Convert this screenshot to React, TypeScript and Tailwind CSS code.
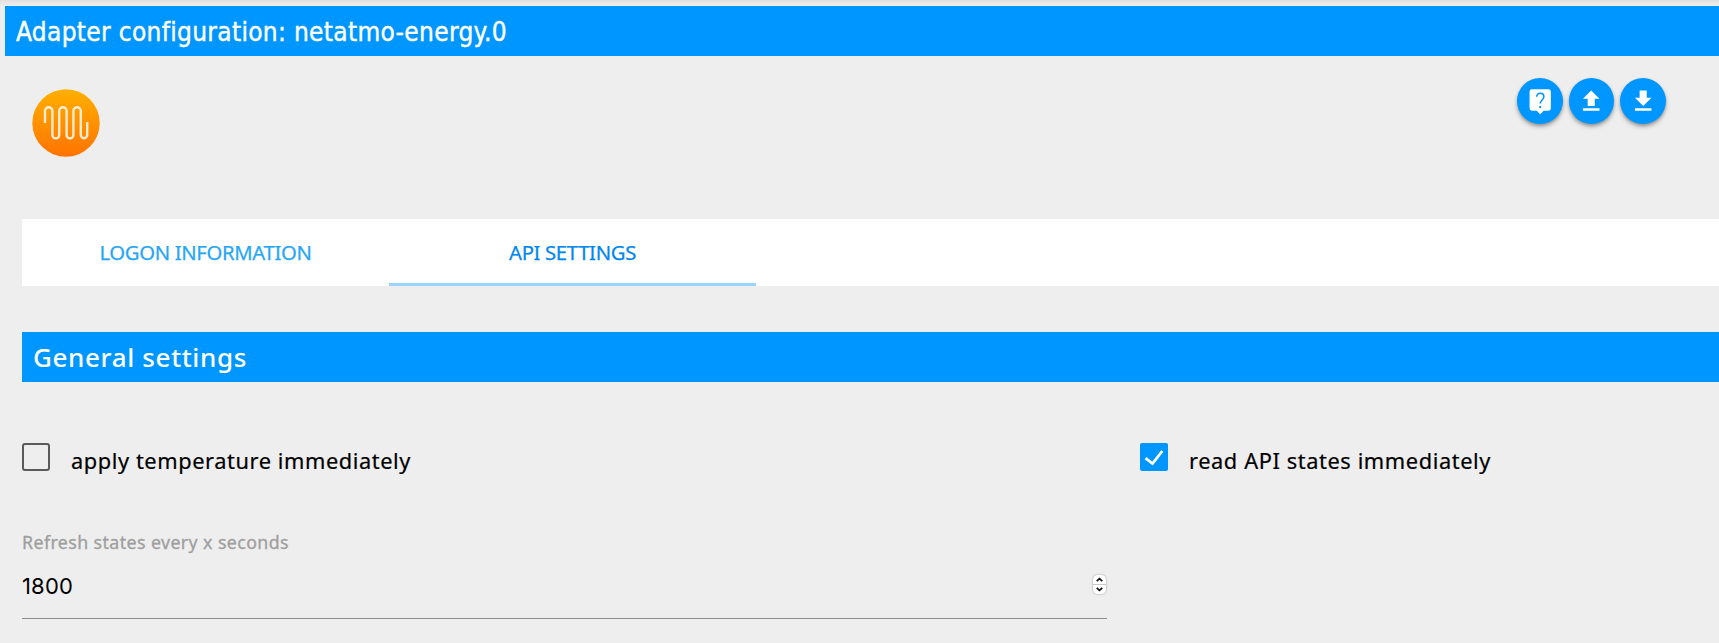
import React from "react";

function LogoIcon() {
  return (
    <svg className="block h-[68px] w-[68px]" viewBox="0 0 68 68" fill="none">
      <defs>
        <linearGradient id="flame" x1="0" y1="0" x2="0" y2="1">
          <stop offset="0" stopColor="#ffb000" />
          <stop offset="1" stopColor="#ff7300" />
        </linearGradient>
      </defs>
      <circle cx="34" cy="34" r="33.7" fill="url(#flame)" />
      <path
        d="M13 34V22a3.7 3.7 0 0 1 7.4 0v24a3.4 3.4 0 0 0 6.8 0V22a3.7 3.7 0 0 1 7.4 0v24a3.4 3.4 0 0 0 6.8 0V22a3.7 3.7 0 0 1 7.4 0v24a3.2 3.2 0 0 0 6.4 0V33"
        stroke="#ffecd0"
        strokeWidth="2.4"
      />
    </svg>
  );
}

function RoundButton({ children }: { children: React.ReactNode }) {
  return (
    <button className="flex h-[45.5px] w-[45.5px] items-center justify-center rounded-full bg-[#0096ff] shadow-[0_2px_3px_rgba(0,0,0,0.22),0_3px_5px_rgba(0,0,0,0.2)]">
      <svg className="block h-[28.4px] w-[28.4px]" viewBox="0 0 24 24" fill="white">
        {children}
      </svg>
    </button>
  );
}

function Fit({ width, size, children }: { width: number; size: number; children: string }) {
  const ref = React.useRef<HTMLSpanElement>(null);
  const [spacing, setSpacing] = React.useState(0);
  React.useLayoutEffect(() => {
    const el = ref.current;
    if (el) setSpacing((width - el.getBoundingClientRect().width) / children.length);
  }, [width, children]);
  return (
    <span ref={ref} className="inline-block whitespace-pre" style={{ letterSpacing: spacing, fontSize: size }}>
      {children}
    </span>
  );
}

export default function App() {
  return (
    <div className="h-[643px] w-full overflow-hidden bg-[#eeeeee] font-['Noto_Sans',sans-serif] text-black">
      <div className="h-[5px] bg-linear-to-b from-[#e0e0e0] to-[#ececec]" />
      <header className="mt-px ml-[5px] flex h-[50px] items-center bg-[#0096ff] pt-[3px] pl-[11px] font-['DejaVu_Sans_Condensed','DejaVu_Sans',sans-serif] font-stretch-condensed text-white [-webkit-text-stroke:0.4px_white]">
        <Fit width={491} size={26}>Adapter configuration: netatmo-energy.0</Fit>
      </header>

      <div className="flex h-[163px] items-start justify-between pr-[53.5px] pl-[32.4px]">
        <div className="pt-[33.4px]">
          <LogoIcon />
        </div>
        <div className="flex gap-[6px] pt-[22.4px]">
          <RoundButton>
            <path d="M19 2H5a2 2 0 0 0-2 2v14a2 2 0 0 0 2 2h4l3 3 3-3h4a2 2 0 0 0 2-2V4a2 2 0 0 0-2-2z" />
            <path d="M9 8.3c0-1.9 1.2-3 3-3s3.1 1.2 3.1 2.9c0 2.6-3 2.9-3 5.8" fill="none" stroke="#0096ff" strokeWidth="1.3" />
            <path d="M11.2 16h1.6v1.8h-1.6z" fill="#0096ff" />
          </RoundButton>
          <RoundButton>
            <path d="M9 16h6v-6h4l-7-7-7 7h4zm-4 2h14v2H5z" />
          </RoundButton>
          <RoundButton>
            <path d="M19 9h-4V3H9v6H5l7 7 7-7zM5 18v2h14v-2H5z" />
          </RoundButton>
        </div>
      </div>

      <nav className="ml-[22px] flex h-[67px] bg-white [-webkit-text-stroke:0.25px_currentColor]">
        <button className="flex w-[367px] items-center justify-center text-[#26a6f5]">
          <Fit width={212} size={20.3}>LOGON INFORMATION</Fit>
        </button>
        <button className="flex w-[367px] items-center justify-center border-b-[3px] border-[#99d5ff] pt-[3px] text-[#0087f0]">
          <Fit width={127} size={20.3}>API SETTINGS</Fit>
        </button>
      </nav>

      <h2 className="mt-[45.5px] ml-[22px] flex h-[50.5px] items-center bg-[#0096ff] pt-[2px] pl-[11px] font-medium text-white">
        <Fit width={214} size={26}>General settings</Fit>
      </h2>

      <div className="mt-[61px] ml-[22px] flex h-[28px] [-webkit-text-stroke:0.2px_currentColor]">
        <label className="flex w-[1118px] items-center">
          <span className="h-[28px] w-[28px] rounded-[3px] border-2 border-[#5a5a5a]" />
          <span className="pt-[9px] pl-[21px]">
            <Fit width={340} size={21.8}>apply temperature immediately</Fit>
          </span>
        </label>
        <label className="flex items-center">
          <span className="flex h-[28px] w-[28px] items-center justify-center rounded-[2px] bg-[#0096ff]">
            <svg className="block h-[28px] w-[28px]" viewBox="0 0 28 28" fill="none">
              <path d="M5.5 15.2l7 5.3L22.3 8" stroke="white" strokeWidth="2.8" />
            </svg>
          </span>
          <span className="pt-[9px] pl-[21px]">
            <Fit width={302} size={21.8}>read API states immediately</Fit>
          </span>
        </label>
      </div>

      <div className="mt-[59px] ml-[22px] w-[1085px]">
        <div className="flex h-[24px] items-center text-[#9e9e9e] [-webkit-text-stroke:0.3px_currentColor]">
          <Fit width={267} size={17.8}>Refresh states every x seconds</Fit>
        </div>
        <div className="flex h-[65px] items-center justify-between border-b border-[#8e8e8e] pr-[1px] font-['Inter',sans-serif]">
          <Fit width={51} size={22}>1800</Fit>
          <span className="mb-[3px] flex h-[19px] w-[13px] flex-col rounded-[4.5px] bg-white shadow-[0_0_2px_rgba(0,0,0,0.4)]">
            <svg className="block h-[19px] w-[13px]" viewBox="0 0 13 19" fill="none">
              <path d="M0 9.5h13" stroke="#c8c8c8" />
              <path d="M3.7 6.2l2.8-2.5 2.8 2.5M3.7 12.8l2.8 2.5 2.8-2.5" stroke="#111" strokeWidth="1.7" />
            </svg>
          </span>
        </div>
      </div>
    </div>
  );
}
